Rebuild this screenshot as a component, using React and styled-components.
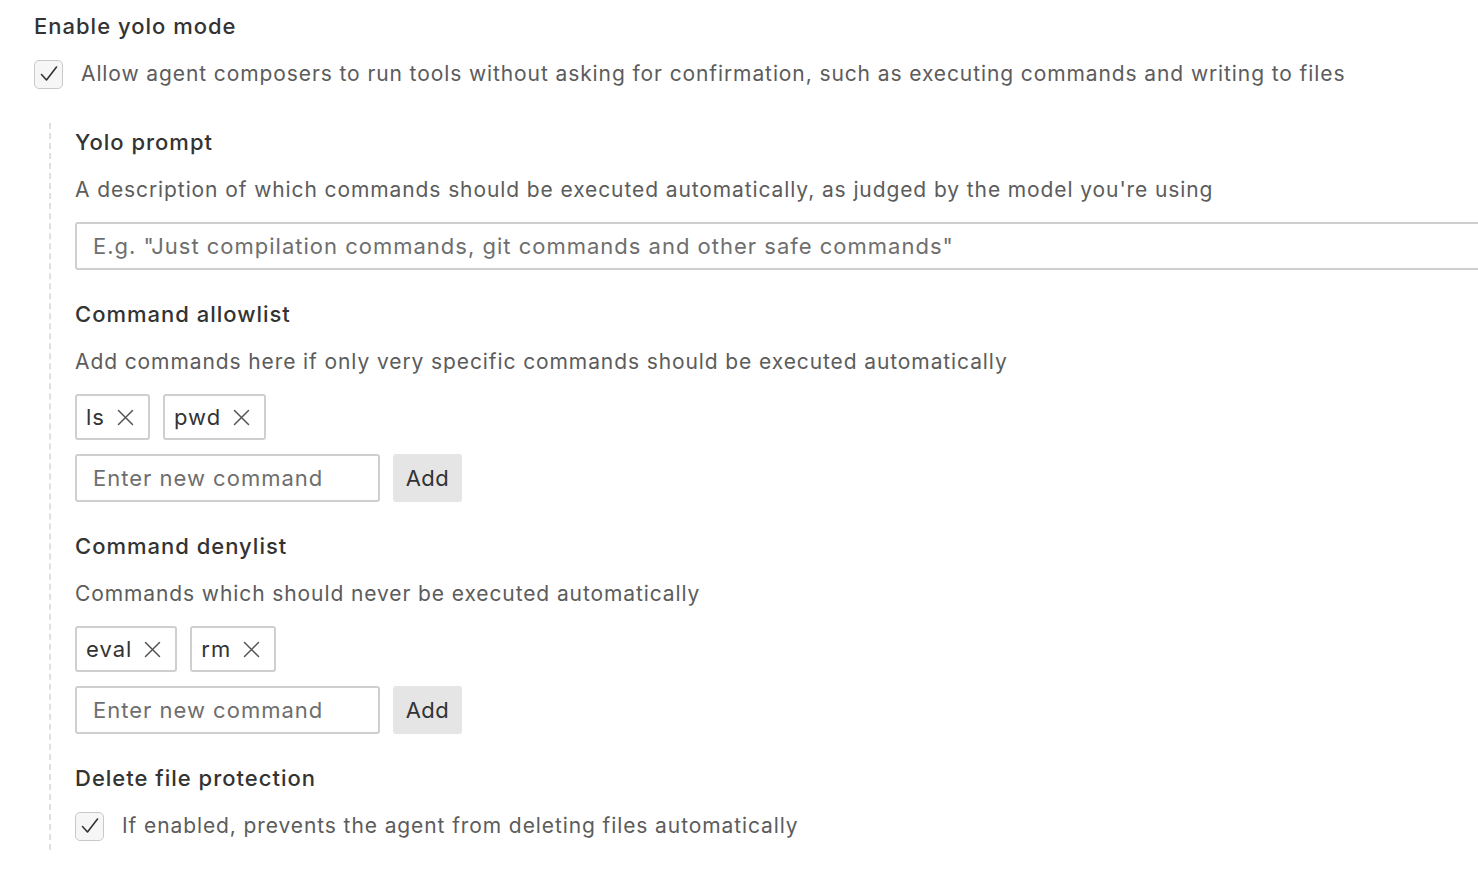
import React, {useState} from "react";
import styled, {createGlobalStyle} from "styled-components";

const Global = createGlobalStyle`
  html, body {
    margin: 0;
    padding: 0;
    background: #ffffff;
    overflow: hidden;
  }
  body {
    font-family: Inter, "Noto Sans", sans-serif;
  }
`;

function Check(props) {
  return (
    <CheckBox onClick={props.onClick}>
      {props.checked && (
        <svg width="22" height="22" viewBox="0 0 22 22">
          <path d="M3.5 11.5 L8.5 17 L18.5 4" fill="none" stroke="#333" strokeWidth="1.6" strokeLinecap="round" strokeLinejoin="round" />
        </svg>
      )}
    </CheckBox>
  );
}

function Cross() {
  return (
    <svg width="17" height="17" viewBox="0 0 17 17">
      <path d="M1.5 1.5 L15.5 15.5 M15.5 1.5 L1.5 15.5" stroke="#555" strokeWidth="1.5" strokeLinecap="round" />
    </svg>
  );
}

function CommandList(props) {
  const [items, setItems] = useState(props.items);
  const [text, setText] = useState("");

  return (
    <>
      <Chips>
        {items.map((item) => (
          <Chip key={item}>
            {item}
            <ChipX onClick={() => setItems(items.filter((v) => v !== item))}>
              <Cross />
            </ChipX>
          </Chip>
        ))}
      </Chips>
      <AddRow>
        <SmallInput
          placeholder="Enter new command"
          value={text}
          onChange={(e) => setText(e.target.value)}
        />
        <AddBtn
          onClick={() => {
            if (text.trim()) {
              setItems([...items, text.trim()]);
              setText("");
            }
          }}
        >
          Add
        </AddBtn>
      </AddRow>
    </>
  );
}

export default function App() {
  const [yolo, setYolo] = useState(true);
  const [protect, setProtect] = useState(true);

  return (
    <>
      <Global />
      <Page>
        <Heading>Enable yolo mode</Heading>
        <CheckRow>
          <Check checked={yolo} onClick={() => setYolo(!yolo)} />
          <Desc>Allow agent composers to run tools without asking for confirmation, such as executing commands and writing to files</Desc>
        </CheckRow>
        <Nested>
          <Section>
            <Heading>Yolo prompt</Heading>
            <Desc>A description of which commands should be executed automatically, as judged by the model you're using</Desc>
            <WideInput placeholder={'E.g. "Just compilation commands, git commands and other safe commands"'} />
          </Section>
          <Section>
            <Heading>Command allowlist</Heading>
            <Desc>Add commands here if only very specific commands should be executed automatically</Desc>
            <CommandList items={["ls", "pwd"]} />
          </Section>
          <Section>
            <Heading>Command denylist</Heading>
            <Desc>Commands which should never be executed automatically</Desc>
            <CommandList items={["eval", "rm"]} />
          </Section>
          <Section>
            <Heading>Delete file protection</Heading>
            <CheckRow>
              <Check checked={protect} onClick={() => setProtect(!protect)} />
              <Desc>If enabled, prevents the agent from deleting files automatically</Desc>
            </CheckRow>
          </Section>
        </Nested>
      </Page>
    </>
  );
}

const Page = styled.div`
  padding: 10px 0 0 34px;
  display: flex;
  flex-direction: column;
  gap: 16px;
`;

const Heading = styled.div`
  font-size: 22px;
  font-weight: 500;
  color: #333;
  line-height: 32px;
  letter-spacing: 1px;
`;

const Desc = styled.div`
  font-size: 21px;
  color: #5c5c5c;
  line-height: 32px;
  letter-spacing: 0.9px;
  white-space: nowrap;
`;

const CheckRow = styled.div`
  display: flex;
  align-items: center;
  gap: 18px;
`;

const CheckBox = styled.div`
  width: 27px;
  height: 27px;
  border: 1.5px solid #c9c9c9;
  border-radius: 5px;
  background: #f6f6f6;
  display: flex;
  align-items: center;
  justify-content: center;
  cursor: pointer;
  flex-shrink: 0;
`;

const Nested = styled.div`
  margin-left: 15px;
  margin-top: 17px;
  padding: 3px 0 8px 24px;
  border-left: 2px dashed #e0e0e0;
  display: flex;
  flex-direction: column;
  gap: 28px;
`;

const Section = styled.div`
  display: flex;
  flex-direction: column;
  gap: 16px;
`;

const WideInput = styled.input`
  box-sizing: border-box;
  width: 1500px;
  height: 48px;
  border: 2px solid #cfcfcf;
  border-radius: 3px;
  padding: 0 16px;
  font-family: Inter, "Noto Sans", sans-serif;
  font-size: 22px;
  letter-spacing: 1px;
  color: #333;
  outline: none;
  &::placeholder {
    color: #6e6e6e;
  }
`;

const Chips = styled.div`
  display: flex;
  gap: 13px;
`;

const Chip = styled.div`
  box-sizing: border-box;
  height: 46px;
  border: 2px solid #cfcfcf;
  border-radius: 3px;
  padding: 0 14px 0 9px;
  display: flex;
  align-items: center;
  gap: 12px;
  font-size: 22px;
  letter-spacing: 1px;
  color: #333;
`;

const ChipX = styled.span`
  display: flex;
  cursor: pointer;
`;

const AddRow = styled.div`
  display: flex;
  gap: 13px;
  margin-top: -2px;
`;

const SmallInput = styled.input`
  box-sizing: border-box;
  width: 305px;
  height: 48px;
  border: 2px solid #cfcfcf;
  border-radius: 3px;
  padding: 0 16px;
  font-family: Inter, "Noto Sans", sans-serif;
  font-size: 22px;
  letter-spacing: 1px;
  color: #333;
  outline: none;
  &::placeholder {
    color: #6e6e6e;
  }
`;

const AddBtn = styled.button`
  height: 48px;
  width: 69px;
  border: none;
  border-radius: 3px;
  background: #e5e5e5;
  font-family: Inter, "Noto Sans", sans-serif;
  font-size: 22px;
  letter-spacing: 0.5px;
  color: #333;
  cursor: pointer;
`;
